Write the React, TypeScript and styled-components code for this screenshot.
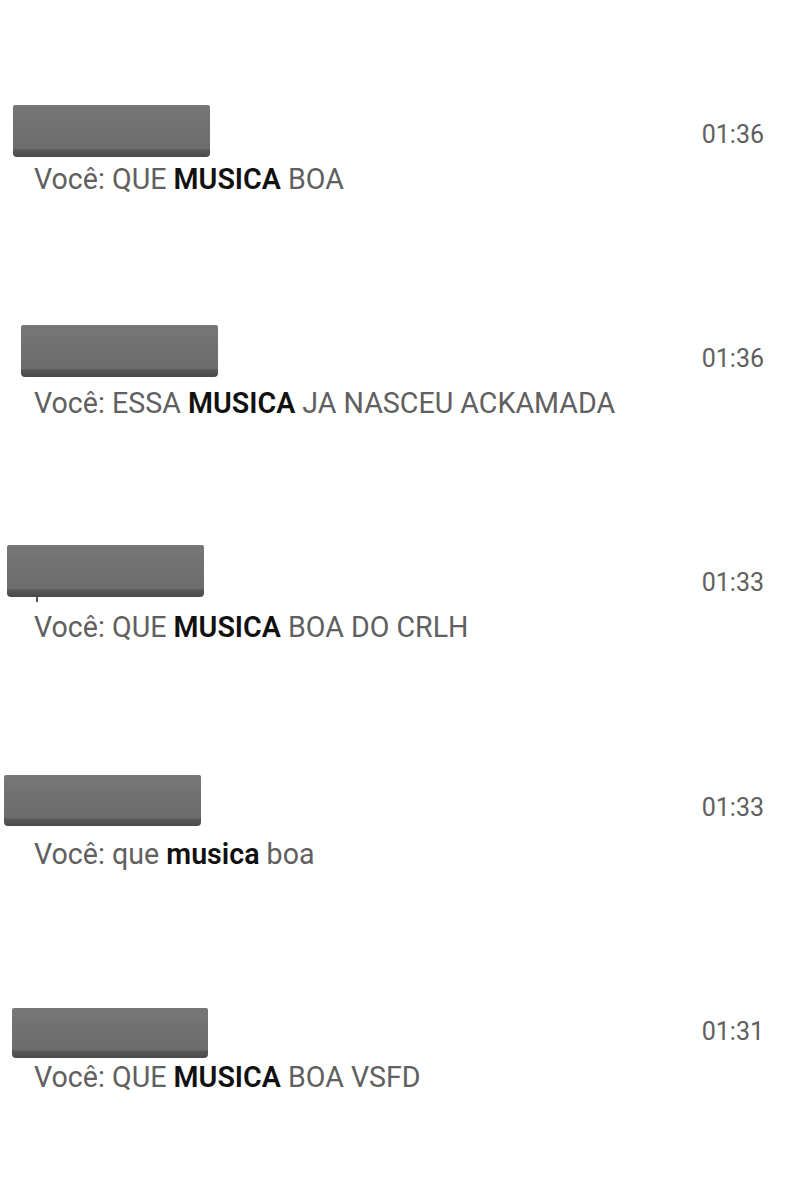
import React from "react";
import styled, { createGlobalStyle } from "styled-components";

const Global = createGlobalStyle`
  html, body { margin: 0; padding: 0; background: #ffffff; }
  body { font-family: Roboto, "Noto Sans", "Liberation Sans", sans-serif; }
`;

const Page = styled.div`
  width: 798px;
  min-height: 1200px;
  background: #ffffff;
  padding: 105px 34px 0 0;
  box-sizing: border-box;
  display: flex;
  flex-direction: column;
`;

const Entry = styled.div<{ $space: number }>`
  display: grid;
  grid-template-columns: 1fr auto;
  margin-top: ${(p) => p.$space}px;
  &:first-child { margin-top: 0; }
`;

const Left = styled.div`
  display: flex;
  flex-direction: column;
`;

const Redaction = styled.div<{ $left: number; $width: number; $height: number; $tick?: boolean }>`
  position: relative;
  margin-left: ${(p) => p.$left}px;
  width: ${(p) => p.$width}px;
  height: ${(p) => p.$height}px;
  border-radius: 2px 2px 4px 4px;
  background: linear-gradient(
    to bottom,
    #777777 0%,
    #717171 40%,
    #6c6c6c 84%,
    #565656 87%,
    #4a4a4c 100%
  );
  &::after {
    content: "";
    display: ${(p) => (p.$tick ? "block" : "none")};
    position: absolute;
    left: 29px;
    top: 100%;
    width: 2px;
    height: 5px;
    background: #555;
  }
`;

const Message = styled.div<{ $gap: number }>`
  margin-top: ${(p) => p.$gap}px;
  margin-left: 34px;
  font-size: 28.6px;
  line-height: 26px;
  color: #606060;
  white-space: nowrap;
`;

const Hit = styled.span`
  color: #111111;
  font-weight: 600;
`;

const Time = styled.div<{ $top: number }>`
  margin-top: ${(p) => p.$top}px;
  font-size: 25px;
  line-height: 25px;
  color: #606060;
`;

type Item = {
  space: number;
  left: number;
  width: number;
  height: number;
  gap: number;
  timeTop: number;
  time: string;
  before: string;
  hit: string;
  after: string;
  tick?: boolean;
};

const items: Item[] = [
  { space: 0, left: 13, width: 197, height: 52, gap: 9, timeTop: 17, time: "01:36", before: "Você: QUE ", hit: "MUSICA", after: " BOA" },
  { space: 133, left: 21, width: 197, height: 52, gap: 13, timeTop: 21, time: "01:36", before: "Você: ESSA ", hit: "MUSICA", after: " JA NASCEU ACKAMADA" },
  { space: 129, left: 7, width: 197, height: 52, gap: 17, timeTop: 25, time: "01:33", before: "Você: QUE ", hit: "MUSICA", after: " BOA DO CRLH", tick: true },
  { space: 135, left: 4, width: 197, height: 51, gap: 15, timeTop: 20, time: "01:33", before: "Você: que ", hit: "musica", after: " boa" },
  { space: 141, left: 12, width: 196, height: 50, gap: 6, timeTop: 11, time: "01:31", before: "Você: QUE ", hit: "MUSICA", after: " BOA VSFD" },
];

export default function App() {
  return (
    <>
      <Global />
      <Page>
        {items.map((it, i) => (
          <Entry key={i} $space={it.space}>
            <Left>
              <Redaction $left={it.left} $width={it.width} $height={it.height} $tick={it.tick} />
              <Message $gap={it.gap}>
                {it.before}
                <Hit>{it.hit}</Hit>
                {it.after}
              </Message>
            </Left>
            <Time $top={it.timeTop}>{it.time}</Time>
          </Entry>
        ))}
      </Page>
    </>
  );
}
